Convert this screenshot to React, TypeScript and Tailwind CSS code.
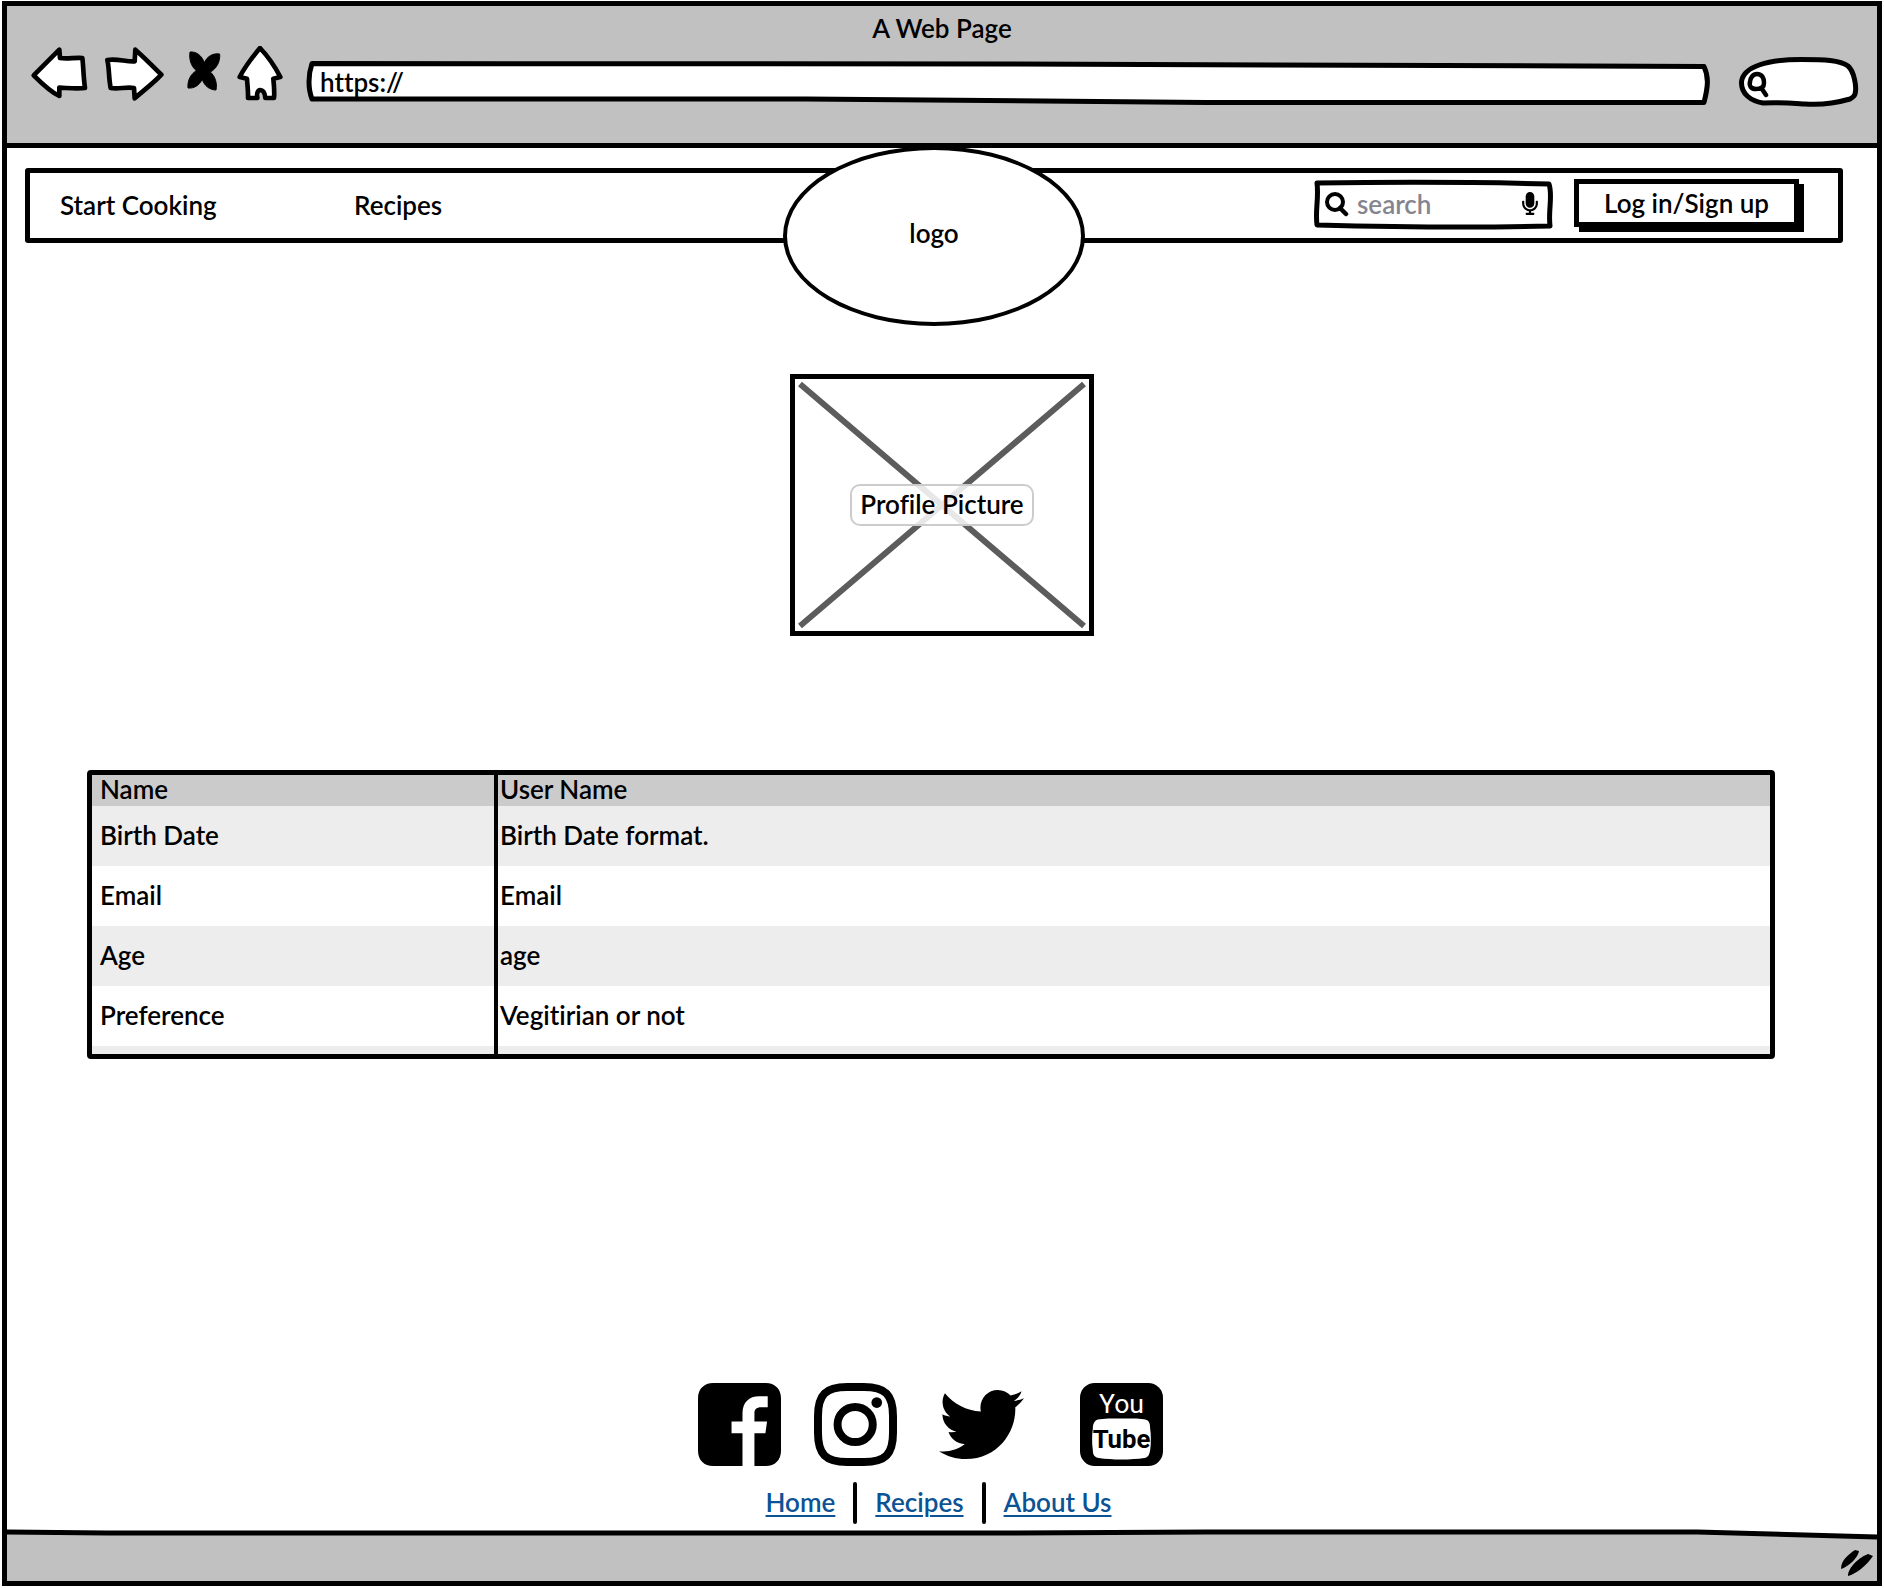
import React from "react";
import { FaTwitter, FaMicrophone } from "react-icons/fa";

type SketchProps = { width: number; height: number; path: string; stroke?: number };

/* Hand-drawn outline that stretches behind the control it belongs to. */
function Sketch({ width, height, path, stroke = 5 }: SketchProps) {
  return (
    <svg
      aria-hidden="true"
      className="pointer-events-none absolute inset-0 h-full w-full overflow-visible"
      viewBox={`0 0 ${width} ${height}`}
      preserveAspectRatio="none"
    >
      <path
        d={path}
        fill="white"
        stroke="black"
        strokeWidth={stroke}
        strokeLinejoin="round"
        strokeLinecap="round"
        vectorEffect="non-scaling-stroke"
      />
    </svg>
  );
}

const toolButtons = [
  {
    label: "Back",
    size: "h-[55px] w-[60px]",
    box: "90 138 180 165",
    d: "M101 226L178 149L180 174C200 178 225 172 247 174C250 195 250 230 255 264C230 267 205 264 178 263L178 288C150 275 125 250 101 226Z",
    fill: "white",
  },
  {
    label: "Forward",
    size: "h-[55px] w-[64px]",
    box: "312 138 192 165",
    d: "M322 180C350 175 380 186 404 184L406 149C430 170 460 200 484 224C460 250 430 272 404 295L402 264C380 260 355 268 332 264C326 235 328 205 322 180Z",
    fill: "white",
  },
  {
    label: "Stop",
    size: "h-[55px] w-[40px]",
    box: "546 138 120 165",
    d: "M570 156C590 154 606 168 613 188C622 168 640 159 659 162C661 184 650 206 631 216C646 230 652 250 648 270C628 270 612 256 607 238C597 256 583 266 564 264C562 242 572 222 589 212C572 198 567 176 570 156Z",
    fill: "black",
  },
  {
    label: "Home page",
    size: "h-[55px] w-[50px]",
    box: "708 138 150 165",
    d: "M780 144C800 165 825 200 841 231L820 236C822 255 824 275 822 294L796 294C795 282 790 270 780 270C772 272 770 283 772 294L744 294C745 275 742 255 741 236L719 231C735 200 758 170 780 144Z",
    fill: "white",
  },
];

function BrowserBar() {
  return (
    <header className="h-[142px] border-b-[5px] border-black bg-[#c1c1c1] px-[23px] pt-[6px]">
      <h1 className="text-center">A Web Page</h1>
      <div className="flex items-start">
        <div className="mt-[2px] flex gap-[14px]">
          {toolButtons.map((b) => (
            <button key={b.label} type="button" aria-label={b.label}>
              <svg className={b.size} viewBox={b.box}>
                <path
                  d={b.d}
                  fill={b.fill}
                  stroke="black"
                  strokeWidth={b.fill === "white" ? 14 : 3}
                  strokeLinejoin="round"
                />
              </svg>
            </button>
          ))}
        </div>
        <div className="relative mt-[17px] ml-[20px] h-[44px] min-w-0 flex-1">
          <Sketch
            width={1403}
            height={44}
            path="M6 2.5L700 3L1398 5.5C1403 16 1402 26 1398 41.5L900 41.5L500 38L6 38C2 28 2 14 6 2.5Z"
          />
          <input
            aria-label="Address"
            defaultValue="https://"
            className="relative h-[42px] w-full bg-transparent px-[14px] outline-none"
          />
        </div>
        <label className="relative mt-[13px] mr-[-4px] ml-[30px] h-[50px] w-[119px]">
          <Sketch
            width={119}
            height={50}
            path="M24 46C12 44 2 37 2.5 25C4 9 30 2.5 62 2.5C85 2.5 101 3 109 9C115 14 118 30 116 37C115 40 113 41 111 42C90 48 78 48 66 47C50 46 38 45 24 46"
          />
          <svg className="absolute top-[13px] left-[7px] h-[28px] w-[24px]" viewBox="0 0 24 28">
            <path
              d="M11 4C16 4 18 8 18 13C18 18 14 19 10 19C5 19 3 16 4 12C4 8 7 4 11 4ZM16 19L20 25"
              fill="none"
              stroke="black"
              strokeWidth="4.5"
              strokeLinecap="round"
            />
          </svg>
          <input aria-label="Web search" className="relative h-full w-full bg-transparent pr-3 pl-9 outline-none" />
        </label>
      </div>
    </header>
  );
}

function NavBar() {
  return (
    <nav className="relative mt-[20px] mr-[34px] ml-[18px] flex h-[75px] items-center rounded-[3px] border-[5px] border-black pr-[39px] pb-[2px] pl-[30px]">
      <a href="#cook" className="w-[294px]">
        Start Cooking
      </a>
      <a href="#recipes">Recipes</a>
      <div className="absolute -top-[27px] left-1/2 flex h-[180px] w-[302px] -translate-x-1/2 items-center justify-center rounded-[50%] border-4 border-black bg-white pb-[6px]">
        logo
      </div>
      <label className="relative ml-auto flex h-[49px] w-[240px] items-center pr-[16px] pb-[2px] pl-[11px]">
        <Sketch
          width={240}
          height={49}
          path="M3 3C80 2 160 2 235 4C239 16 234 30 236 46C160 48 80 47 3 45C1 30 5 18 3 3Z"
        />
        <svg className="relative h-[26px] w-[24px] shrink-0" viewBox="0 0 24 26">
          <circle cx="10" cy="11" r="8" fill="none" stroke="black" strokeWidth="4" />
          <path d="M15 17L21 23" stroke="black" strokeWidth="4.5" strokeLinecap="round" />
        </svg>
        <input
          type="search"
          aria-label="Search recipes"
          placeholder="search"
          className="relative ml-[8px] min-w-0 flex-1 bg-transparent outline-none placeholder:text-[#85858f] placeholder:opacity-100"
        />
        <FaMicrophone className="relative h-[23px] w-[16px] shrink-0" />
      </label>
      <button
        type="button"
        className="mb-1 ml-[20px] h-[48px] w-[225px] border-[5px] border-black bg-white leading-none shadow-[5px_5px_0_black]"
      >
        Log in/Sign up
      </button>
    </nav>
  );
}

function ProfilePicture() {
  return (
    <figure className="relative mx-auto mt-[131px] flex h-[262px] w-[304px] items-center justify-center border-[5px] border-black">
      <svg
        aria-hidden="true"
        className="absolute inset-0 h-full w-full"
        viewBox="0 0 295 252"
        preserveAspectRatio="none"
      >
        <path d="M5 5L290 247M290 5L5 247" stroke="#5c5c5c" strokeWidth="6" />
      </svg>
      <figcaption className="relative flex h-[42px] w-[184px] items-center justify-center rounded-[10px] border-2 border-[#cccccc] bg-white/85 pb-[2px]">
        Profile Picture
      </figcaption>
    </figure>
  );
}

const rows = [
  ["Birth Date", "Birth Date format."],
  ["Email", "Email"],
  ["Age", "age"],
  ["Preference", "Vegitirian or not"],
];

function ProfileTable() {
  return (
    <div className="mt-[134px] mr-[102px] ml-[80px] rounded-[4px] border-[5px] border-black">
      <table className="w-full table-fixed border-collapse text-left">
        <thead>
          <tr className="h-[31px] bg-[#cbcbcb] align-top leading-[28px]">
            <th className="w-[404px] border-r-4 border-black p-0 pl-[8px] font-semibold">Name</th>
            <th className="p-0 pl-[2px] font-semibold">User Name</th>
          </tr>
        </thead>
        <tbody>
          {rows.map(([name, value]) => (
            <tr key={name} className="h-[60px] odd:bg-[#ededed]">
              <td className="border-r-4 border-black p-0 pb-[2px] pl-[8px]">{name}</td>
              <td className="p-0 pb-[2px] pl-[2px]">{value}</td>
            </tr>
          ))}
          <tr className="h-[8px] bg-[#ededed]">
            <td className="border-r-4 border-black p-0" />
            <td className="p-0" />
          </tr>
        </tbody>
      </table>
    </div>
  );
}

function SocialLinks() {
  return (
    <div className="flex items-center justify-center pr-[24px]">
      <a href="#facebook" aria-label="Facebook">
        <svg className="h-[83px] w-[83px]" viewBox="0 0 250 250">
          <path
            fillRule="evenodd"
            d="M46 0H204C232 0 250 18 250 46V204C250 232 232 250 204 250H170V151H203L208 116H170V90C170 80 176 73 190 73H210V40H184C154 40 134 58 134 92V116H101V151H134V250H46C18 250 0 232 0 204V46C0 18 18 0 46 0Z"
          />
        </svg>
      </a>
      <a href="#instagram" aria-label="Instagram" className="ml-[33px]">
        <svg className="h-[83px] w-[83px]" viewBox="0 0 250 250">
          <path
            d="M125 12H150C215 12 238 35 238 100V150C238 215 215 238 150 238H100C35 238 12 215 12 150V100C12 35 35 12 100 12Z"
            fill="none"
            stroke="black"
            strokeWidth="24"
          />
          <circle cx="124" cy="125" r="53" fill="none" stroke="black" strokeWidth="24" />
          <circle cx="189" cy="59" r="16" />
        </svg>
      </a>
      <a href="#twitter" aria-label="Twitter" className="ml-[42px]">
        <FaTwitter className="h-[85px] w-[85px]" />
      </a>
      <a href="#youtube" aria-label="YouTube" className="ml-[56px]">
        <svg className="h-[83px] w-[83px]" viewBox="0 0 84 84">
          <rect width="84" height="84" rx="15" />
          <path
            d="M42 36C54 36 62 36 66 37C70 38 71 41 71 46C72 53 72 61 71 68C70 73 69 75 65 76C52 78 32 78 19 76C15 75 13 73 13 68C12 61 12 53 13 46C13 41 15 38 18 37C24 36 32 36 42 36Z"
            fill="white"
          />
          <text
            x="42"
            y="30"
            textAnchor="middle"
            fill="white"
            className="font-['Roboto',sans-serif] text-[27px] font-normal"
          >
            You
          </text>
          <text x="42" y="66" textAnchor="middle" className="font-['Roboto',sans-serif] text-[26px] font-bold">
            Tube
          </text>
        </svg>
      </a>
    </div>
  );
}

const footerLinks = ["Home", "Recipes", "About Us"];

function FooterNav() {
  return (
    <nav aria-label="Footer" className="mt-[14px] flex h-[43px] items-center justify-center pr-[7px]">
      {footerLinks.map((text, i) => (
        <React.Fragment key={text}>
          {i > 0 && <span className="mx-[18px] h-[42px] w-[4px] rounded-full bg-black" />}
          <a href={`#${i}`} className="pb-[2px] text-[#0b5394] underline decoration-2 underline-offset-[3px]">
            {text}
          </a>
        </React.Fragment>
      ))}
    </nav>
  );
}

function StatusBar() {
  return (
    <footer className="relative mt-[5px] h-[52px] bg-[#c1c1c1]">
      <svg
        aria-hidden="true"
        className="block h-[12px] w-full overflow-visible"
        viewBox="0 0 1870 12"
        preserveAspectRatio="none"
      >
        <path d="M0 -1L1690 -1L1870 0V8L1690 3L0 3Z" fill="white" />
        <path
          d="M0 3L100 4L1000 4L1200 3L1690 3L1870 8"
          fill="none"
          stroke="black"
          strokeWidth="5"
          vectorEffect="non-scaling-stroke"
        />
      </svg>
      <svg aria-hidden="true" className="absolute right-[3px] bottom-[4px] h-[32px] w-[34px]" viewBox="0 0 34 32">
        <path d="M1 24C1 15 9 9 15 5L19 6C18 13 8 22 1 24ZM8 31C8 22 20 12 28 9L33 11C27 20 16 29 8 31Z" />
      </svg>
    </footer>
  );
}

export default function App() {
  return (
    <div className="min-h-screen bg-white pt-px pr-[2px] pb-[2px] pl-[2px] font-['Lato',sans-serif] text-[26px] leading-[32px] font-semibold text-black [font-variant-ligatures:none]">
      <div className="flex min-h-[calc(100vh-3px)] flex-col border-[5px] border-black">
        <BrowserBar />
        <main className="flex flex-1 flex-col">
          <NavBar />
          <ProfilePicture />
          <ProfileTable />
          <div className="mt-auto">
            <SocialLinks />
            <FooterNav />
          </div>
        </main>
        <StatusBar />
      </div>
    </div>
  );
}
